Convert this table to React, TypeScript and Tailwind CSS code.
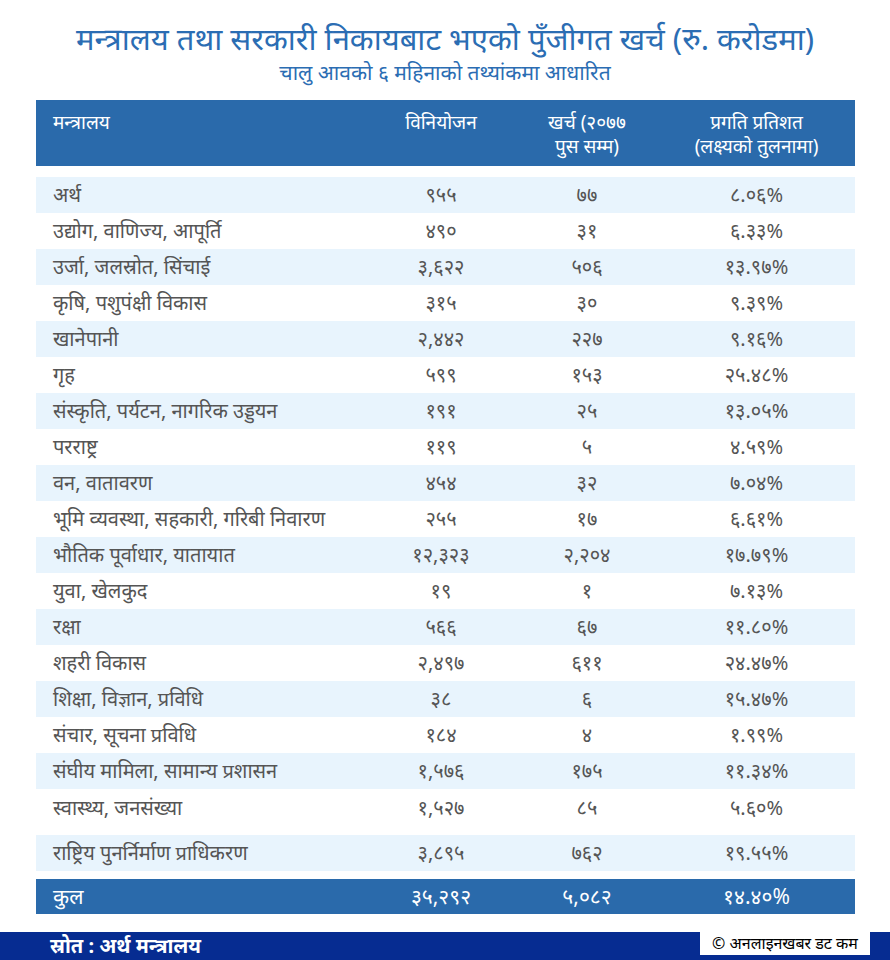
import React from "react";

const rows: [string, string, string, string][] = [
  ["अर्थ", "९५५", "७७", "८.०६%"],
  ["उद्योग, वाणिज्य, आपूर्ति", "४९०", "३१", "६.३३%"],
  ["उर्जा, जलस्रोत, सिंचाई", "३,६२२", "५०६", "१३.९७%"],
  ["कृषि, पशुपंक्षी विकास", "३१५", "३०", "९.३९%"],
  ["खानेपानी", "२,४४२", "२२७", "९.१६%"],
  ["गृह", "५९९", "१५३", "२५.४८%"],
  ["संस्कृति, पर्यटन, नागरिक उड्डयन", "१९१", "२५", "१३.०५%"],
  ["परराष्ट्र", "११९", "५", "४.५९%"],
  ["वन, वातावरण", "४५४", "३२", "७.०४%"],
  ["भूमि व्यवस्था, सहकारी, गरिबी निवारण", "२५५", "१७", "६.६१%"],
  ["भौतिक पूर्वाधार, यातायात", "१२,३२३", "२,२०४", "१७.७९%"],
  ["युवा, खेलकुद", "१९", "१", "७.१३%"],
  ["रक्षा", "५६६", "६७", "११.८०%"],
  ["शहरी विकास", "२,४९७", "६११", "२४.४७%"],
  ["शिक्षा, विज्ञान, प्रविधि", "३८", "६", "१५.४७%"],
  ["संचार, सूचना प्रविधि", "१८४", "४", "१.९९%"],
  ["संघीय मामिला, सामान्य प्रशासन", "१,५७६", "१७५", "११.३४%"],
  ["स्वास्थ्य, जनसंख्या", "१,५२७", "८५", "५.६०%"],
];

const font = { fontFamily: '"Noto Sans", "Noto Sans Devanagari", sans-serif' };

export default function App() {
  return (
    <div className="w-[890px] h-[960px] bg-white flex flex-col" style={font}>
      <div className="pt-[21px] flex flex-col items-center">
        <div className="text-[31px] leading-[34px] h-[34px] text-[#2b6db3]">
          मन्त्रालय तथा सरकारी निकायबाट भएको पुँजीगत खर्च (रु. करोडमा)
        </div>
        <div className="text-[21px] leading-[26px] h-[26px] mt-[4px] text-[#2b6db3]">
          चालु आवको ६ महिनाको तथ्यांकमा आधारित
        </div>
      </div>

      <div className="mx-[36px] mt-[15px] w-[819px]">
        <div className="h-[66px] bg-[#2a6aab] grid grid-cols-[330px_150px_142px_197px] text-white text-[19px] leading-[24px] pt-[10px]">
          <div className="pl-[17px]">मन्त्रालय</div>
          <div className="text-center">विनियोजन</div>
          <div className="text-center">
            <div>खर्च (२०७७</div>
            <div>पुस सम्म)</div>
          </div>
          <div className="text-center">
            <div>प्रगति प्रतिशत</div>
            <div>(लक्ष्यको तुलनामा)</div>
          </div>
        </div>

        <div className="mt-[11px] text-[#555555] text-[20px]">
          {rows.map((r, i) => (
            <div
              key={i}
              className={`grid grid-cols-[330px_150px_142px_197px] ${
                i === rows.length - 1 ? "h-[46px] items-start pt-[4px]" : "h-[36px] items-center"
              } ${i % 2 === 0 ? "bg-[#e8f4fd]" : "bg-white"}`}
            >
              <div className="pl-[17px]">{r[0]}</div>
              <div className="text-center">{r[1]}</div>
              <div className="text-center">{r[2]}</div>
              <div className="text-center">{r[3]}</div>
            </div>
          ))}
          <div className="grid grid-cols-[330px_150px_142px_197px] items-center h-[36px] bg-[#e8f4fd]">
            <div className="pl-[17px]">राष्ट्रिय पुनर्निर्माण प्राधिकरण</div>
            <div className="text-center">३,८९५</div>
            <div className="text-center">७६२</div>
            <div className="text-center">१९.५५%</div>
          </div>
        </div>

        <div className="mt-[8px] h-[35px] bg-[#2a6aab] grid grid-cols-[330px_150px_142px_197px] items-center text-white text-[21px]">
          <div className="pl-[17px]">कुल</div>
          <div className="text-center">३५,२९२</div>
          <div className="text-center">५,०८२</div>
          <div className="text-center">१४.४०%</div>
        </div>
      </div>

      <div className="mt-[18px] h-[28px] bg-[#062c91] flex items-center justify-between">
        <div className="pl-[50px] text-white text-[20px] font-bold leading-[28px]">स्रोत : अर्थ मन्त्रालय</div>
        <div className="self-start mr-[20px] mt-[-1px] h-[24px] w-[170px] bg-white flex items-center justify-center text-black text-[16px]">
          © अनलाइनखबर डट कम
        </div>
      </div>
    </div>
  );
}
